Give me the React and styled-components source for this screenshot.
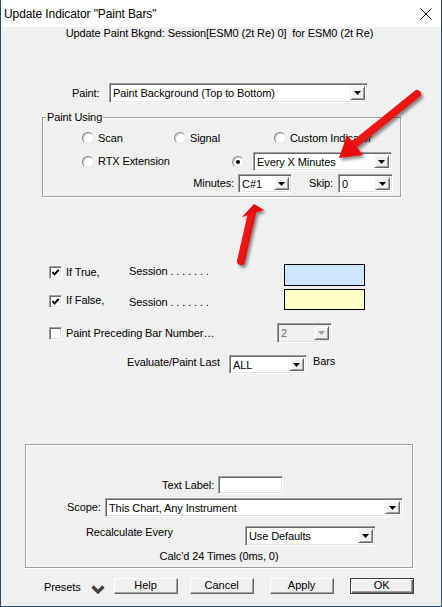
import React from "react";
import styled, { createGlobalStyle } from "styled-components";

const GlobalStyle = createGlobalStyle`
  html, body {
    margin: 0;
    padding: 0;
    background: #ffffff;
  }
  * {
    box-sizing: border-box;
  }
`;

// Window frame
const Window = styled.div`
  position: relative;
  width: 442px;
  height: 607px;
  display: flex;
  flex-direction: column;
  background: #f0f0f0;
  border-left: 1px solid #2f4c6e;
  border-right: 1px solid #2f4c6e;
  border-bottom: 1px solid #2f4c6e;
  font-family: "Liberation Sans", Arial, sans-serif;
  font-size: 11px;
  letter-spacing: -0.1px;
  color: #000;
  overflow: hidden;
`;

const TitleBar = styled.div`
  height: 27px;
  flex-shrink: 0;
  background: #ffffff;
  display: flex;
  align-items: center;
  justify-content: space-between;
  padding: 0 9px 0 3px;
`;

const TitleText = styled.span`
  font-size: 12px;
  line-height: 14px;
  color: #000;
`;

const Body = styled.div`
  flex: 1;
  display: flex;
  flex-direction: column;
`;

const Subtitle = styled.div`
  line-height: 13px;
  text-align: center;
  padding-right: 3px;
  white-space: pre;
`;

const Text = styled.span`
  line-height: 13px;
  white-space: nowrap;
  flex-shrink: 0;
  width: ${(p) => (p.$w ? `${p.$w}px` : "auto")};
  margin-top: ${(p) => p.$mt || 0}px;
  margin-left: ${(p) => p.$ml || 0}px;
  margin-right: ${(p) => p.$mr || 0}px;
  text-align: ${(p) => p.$align || "left"};
  color: ${(p) => (p.$dim ? "#6d6d6d" : "#000")};
`;

const Row = styled.div`
  display: flex;
  align-items: ${(p) => p.$align || "center"};
  justify-content: ${(p) => p.$justify || "flex-start"};
  height: ${(p) => (p.$h ? `${p.$h}px` : "auto")};
  margin-top: ${(p) => p.$mt || 0}px;
  padding-left: ${(p) => p.$pl || 0}px;
`;

// Combo box
const Field = styled.div`
  display: flex;
  align-items: stretch;
  flex-shrink: 0;
  width: ${(p) => p.$w}px;
  height: ${(p) => p.$h || 20}px;
  margin-left: ${(p) => p.$ml || 0}px;
  background: ${(p) => (p.$disabled ? "#f0f0f0" : "#ffffff")};
  border: 1px solid;
  border-color: #a0a0a0 #ffffff #ffffff #a0a0a0;
  box-shadow: inset 1px 1px 0 #696969, inset -1px -1px 0 #e3e3e3;
  padding: 2px;
`;

const FieldValue = styled.span`
  flex: 1;
  display: flex;
  align-items: center;
  padding-left: 1px;
  white-space: nowrap;
  overflow: hidden;
  color: ${(p) => (p.$disabled ? "#6d6d6d" : "#000")};
`;

const DropButton = styled.span`
  width: 15px;
  flex-shrink: 0;
  display: flex;
  align-items: center;
  justify-content: center;
  background: #f0f0f0;
  border: 1px solid;
  border-color: #f0f0f0 #696969 #696969 #f0f0f0;
  box-shadow: inset 1px 1px 0 #ffffff, inset -1px -1px 0 #a0a0a0;
`;

const Combo = ({ w, h, ml, value, disabled }) => (
  <Field $w={w} $h={h} $ml={ml} $disabled={disabled}>
    <FieldValue $disabled={disabled}>{value}</FieldValue>
    <DropButton>
      <svg width="7" height="4" viewBox="0 0 7 4">
        <polygon points="0,0 7,0 3.5,4" fill={disabled ? "#a0a0a0" : "#000"} />
      </svg>
    </DropButton>
  </Field>
);

const TextInput = styled(Field)`
  padding: 0;
`;

// Group box
const Group = styled.div`
  position: relative;
  margin: ${(p) => p.$mt}px 0 0 ${(p) => p.$ml}px;
  width: ${(p) => p.$w}px;
  border: 1px solid #a0a0a0;
  box-shadow: inset 1px 1px 0 #ffffff, 1px 1px 0 #ffffff;
  padding: ${(p) => p.$pad};
`;

const Legend = styled.span`
  position: absolute;
  top: -7px;
  left: 3px;
  padding: 0 1px;
  line-height: 13px;
  background: #f0f0f0;
`;

// Radio buttons
const RadioItem = styled.div`
  display: flex;
  align-items: center;
  flex-shrink: 0;
  width: ${(p) => (p.$w ? `${p.$w}px` : "auto")};
  gap: 4px;
  margin-right: ${(p) => p.$mr || 0}px;
`;

const RadioCircle = styled.span`
  width: 12px;
  height: 12px;
  flex-shrink: 0;
  border-radius: 50%;
  background: #ffffff;
  border: 1px solid;
  border-color: #8a8a8a #e6e6e6 #e6e6e6 #8a8a8a;
  box-shadow: inset 1px 1px 0 #cfcfcf;
  display: flex;
  align-items: center;
  justify-content: center;

  &::after {
    content: "";
    display: ${(p) => (p.$checked ? "block" : "none")};
    width: 4px;
    height: 4px;
    border-radius: 50%;
    background: #000;
  }
`;

const Radio = ({ label, w, mr, checked }) => (
  <RadioItem $w={w} $mr={mr}>
    <RadioCircle $checked={checked} />
    {label && <Text>{label}</Text>}
  </RadioItem>
);

// Checkboxes
const CheckBox = styled.span`
  width: 13px;
  height: 13px;
  flex-shrink: 0;
  margin-top: ${(p) => p.$mt || 0}px;
  margin-right: 4px;
  background: #ffffff;
  border: 1px solid;
  border-color: #a0a0a0 #ffffff #ffffff #a0a0a0;
  box-shadow: inset 1px 1px 0 #696969, inset -1px -1px 0 #e3e3e3;
  display: flex;
  align-items: center;
  justify-content: center;
`;

const Check = ({ checked, mt }) => (
  <CheckBox $mt={mt}>
    {checked && (
      <svg width="9" height="9" viewBox="0 0 9 9">
        <polyline points="1.5,4 3.5,6.5 7.8,1.8" fill="none" stroke="#000" strokeWidth="1.9" />
      </svg>
    )}
  </CheckBox>
);

const ColorBox = styled.span`
  width: 81px;
  height: ${(p) => p.$h}px;
  flex-shrink: 0;
  background: ${(p) => p.$color};
  border: 1px solid #000;
`;

// Bottom buttons
const Button = styled.button`
  width: 64px;
  height: 16px;
  flex-shrink: 0;
  margin-left: ${(p) => p.$ml || 0}px;
  padding: 0 0 2px;
  font-family: "Liberation Sans", Arial, sans-serif;
  font-size: 11px;
  line-height: 12px;
  color: #000;
  background: #f0f0f0;
  border: 1px solid;
  border-color: ${(p) => (p.$default ? "#404040" : "#ffffff #696969 #696969 #ffffff")};
  box-shadow: ${(p) =>
    p.$default
      ? "inset 1px 1px 0 #ffffff, inset -1px -1px 0 #696969, inset -2px -2px 0 #a0a0a0"
      : "inset -1px -1px 0 #a0a0a0"};
`;

const Overlay = styled.svg`
  position: absolute;
  top: 0;
  left: 0;
  pointer-events: none;
`;

const Arrows = () => (
  <Overlay width="442" height="607" viewBox="0 0 442 607">
    <defs>
      <filter id="shadow" x="-30%" y="-30%" width="160%" height="160%">
        <feDropShadow dx="2" dy="2.5" stdDeviation="1.4" floodColor="#000" floodOpacity="0.45" />
      </filter>
      <linearGradient id="red" x1="0" y1="0" x2="1" y2="1">
        <stop offset="0" stopColor="#ff2a2a" />
        <stop offset="1" stopColor="#d80000" />
      </linearGradient>
    </defs>
    <g filter="url(#shadow)">
      <line x1="416" y1="94" x2="354" y2="144" stroke="url(#red)" strokeWidth="8" strokeLinecap="round" />
      <polygon points="338,158 346,135 362,155" fill="#e80808" />
    </g>
    <g filter="url(#shadow)">
      <line x1="240" y1="261" x2="251" y2="213" stroke="url(#red)" strokeWidth="8" strokeLinecap="round" />
      <polygon points="253,204 241,217 263,210" fill="#e80808" />
    </g>
  </Overlay>
);

const App = () => {
  return (
    <Window>
      <GlobalStyle />
      <TitleBar>
        <TitleText>Update Indicator "Paint Bars"</TitleText>
        <svg width="12" height="12" viewBox="0 0 12 12">
          <path d="M0.5 0.5 L11.5 11.5 M11.5 0.5 L0.5 11.5" stroke="#111" strokeWidth="1" />
        </svg>
      </TitleBar>

      <Body>
        <Subtitle>Update Paint Bkgnd: Session[ESM0 (2t Re) 0]  for ESM0 (2t Re)</Subtitle>

        <Row $mt={43} $pl={71} $h={20}>
          <Text $w={37}>Paint:</Text>
          <Combo w={259} value="Paint Background (Top to Bottom)" />
        </Row>

        <Group $mt={14} $ml={41} $w={359} $pad="10px 7px 3px 0">
          <Legend>Paint Using</Legend>
          <Row $h={20} $pl={39}>
            <Radio label="Scan" w={92} />
            <Radio label="Signal" w={100} />
            <Radio label="Custom Indicator" />
          </Row>
          <Row $h={19} $mt={4} $pl={39}>
            <Radio label="RTX Extension" w={150} />
            <Radio checked mr={9} />
            <Combo w={139} h={19} value="Every X Minutes" />
          </Row>
          <Row $h={19} $mt={3} $justify="flex-end">
            <Text $mr={4}>Minutes:</Text>
            <Combo w={54} h={19} value="C#1" />
            <Text $ml={17} $mr={5}>Skip:</Text>
            <Combo w={55} h={19} value="0" />
          </Row>
        </Group>

        <Row $mt={67} $pl={48} $align="flex-start">
          <Check checked mt={2} />
          <Text $w={63} $mt={1.5}>If True,</Text>
          <Text $w={155} $mt={0.5}>Session . . . . . . .</Text>
          <ColorBox $h={22} $color="#cce4fc" />
        </Row>
        <Row $mt={3} $pl={48} $align="flex-start">
          <Check checked mt={6} />
          <Text $w={63} $mt={5}>If False,</Text>
          <Text $w={155} $mt={6.5}>Session . . . . . . .</Text>
          <ColorBox $h={21} $color="#ffffc6" />
        </Row>
        <Row $mt={13} $pl={48} $h={20}>
          <Check />
          <Text $w={211}>Paint Preceding Bar Number…</Text>
          <Combo w={55} value="2" disabled />
        </Row>
        <Row $mt={12} $pl={126} $align="flex-start">
          <Text $w={102} $mt={1}>Evaluate/Paint Last</Text>
          <Combo w={78} h={19} value="ALL" />
          <Text $ml={6} $mt={0}>Bars</Text>
        </Row>

        <Group $mt={70} $ml={24} $w={388} $pad="31px 0 4px">
          <Row $pl={136} $h={18}>
            <Text $w={56}>Text Label:</Text>
            <TextInput $w={65} $h={18} />
          </Row>
          <Row $mt={4} $pl={41} $h={19}>
            <Text $w={38}>Scope:</Text>
            <Combo w={298} h={19} value="This Chart, Any Instrument" />
          </Row>
          <Row $mt={9} $pl={60} $align="flex-start">
            <Text $w={159}>Recalculate Every</Text>
            <Combo w={131} value="Use Defaults" />
          </Row>
          <Row $mt={4} $justify="center">
            <Text>Calc'd 24 Times (0ms, 0)</Text>
          </Row>
        </Group>

        <Row $mt={10} $pl={43} $align="flex-start">
          <Text $mt={3}>Presets</Text>
          <svg width="14" height="9" viewBox="0 0 14 9" style={{ marginLeft: 10, marginTop: 7 }}>
            <polyline points="1.5,1.5 7,7 12.5,1.5" fill="none" stroke="#404040" strokeWidth="3.2" />
          </svg>
          <Button $ml={9}>Help</Button>
          <Button $ml={12}>Cancel</Button>
          <Button $ml={16}>Apply</Button>
          <Button $ml={16} $default>OK</Button>
        </Row>
      </Body>

      <Arrows />
    </Window>
  );
};

export default App;
